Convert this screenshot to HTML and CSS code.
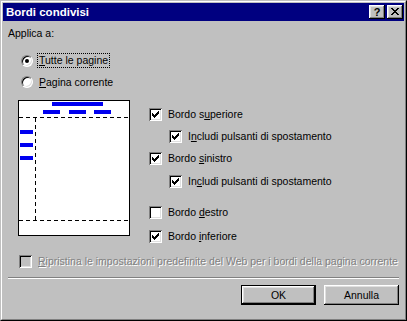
FILE: index.html
```html
<!DOCTYPE html>
<html lang="it">
<head>
    <meta charset="UTF-8">
    <meta name="viewport" content="width=device-width, initial-scale=1.0">
    <title>Bordi condivisi</title>
    <link rel="stylesheet" href="styles.css">
</head>
<body>
    <div class="window">
        <div class="frame">
            <div class="titlebar">
                <span class="title">Bordi condivisi</span>
                <div class="title-buttons">
                    <span class="tbtn help">?</span>
                    <span class="tbtn">
                        <svg width="8" height="7" viewBox="0 0 8 7" shape-rendering="crispEdges"><path d="M0 0h2v1h-2zM6 0h2v1h-2zM1 1h2v1h-2zM5 1h2v1h-2zM2 2h4v1h-4zM3 3h2v1h-2zM2 4h4v1h-4zM1 5h2v1h-2zM5 5h2v1h-2zM0 6h2v1h-2zM6 6h2v1h-2z" fill="#000"/></svg>
                    </span>
                </div>
            </div>

            <div class="content">
                <div class="columns">
                    <div class="left">
                        <div class="label">Applica a:</div>
                        <div class="radio-row first">
                            <span class="radio checked"></span>
                            <span class="focus"><u>T</u>utte le pagine</span>
                        </div>
                        <div class="radio-row">
                            <span class="radio"></span>
                            <span class="radio-text"><u>P</u>agina corrente</span>
                        </div>
                        <div class="preview">
                            <svg width="110" height="134" viewBox="0 0 110 134" shape-rendering="crispEdges">
                                <rect x="33" y="1" width="51" height="4" fill="#0000f0"/>
                                <rect x="24" y="9" width="17" height="4" fill="#0000f0"/>
                                <rect x="50" y="9" width="17" height="4" fill="#0000f0"/>
                                <rect x="75" y="9" width="17" height="4" fill="#0000f0"/>
                                <rect x="1" y="29" width="13" height="4" fill="#0000f0"/>
                                <rect x="1" y="42" width="13" height="4" fill="#0000f0"/>
                                <rect x="1" y="55" width="13" height="4" fill="#0000f0"/>
                                <line x1="0" y1="16.5" x2="110" y2="16.5" stroke="#000" stroke-dasharray="4 3"/>
                                <line x1="16.5" y1="17" x2="16.5" y2="119" stroke="#000" stroke-dasharray="4 3"/>
                                <line x1="0" y1="119.5" x2="110" y2="119.5" stroke="#000" stroke-dasharray="4 3"/>
                            </svg>
                        </div>
                    </div>

                    <div class="right">
                        <div class="check-row r1">
                            <span class="check checked"><svg width="9" height="9" viewBox="0 0 9 9" shape-rendering="crispEdges"><path d="M7 1h1v1h-1zM6 2h2v1h-2zM1 3h1v1h-1zM5 3h3v1h-3zM1 4h2v1h-2zM4 4h3v1h-3zM1 5h5v1h-5zM2 6h3v1h-3zM3 7h1v1h-1z" fill="#000"/></svg></span>
                            <span>Bordo s<u>u</u>periore</span>
                        </div>
                        <div class="check-row sub r2">
                            <span class="check checked"><svg width="9" height="9" viewBox="0 0 9 9" shape-rendering="crispEdges"><path d="M7 1h1v1h-1zM6 2h2v1h-2zM1 3h1v1h-1zM5 3h3v1h-3zM1 4h2v1h-2zM4 4h3v1h-3zM1 5h5v1h-5zM2 6h3v1h-3zM3 7h1v1h-1z" fill="#000"/></svg></span>
                            <span>I<u>n</u>cludi pulsanti di spostamento</span>
                        </div>
                        <div class="check-row r3">
                            <span class="check checked"><svg width="9" height="9" viewBox="0 0 9 9" shape-rendering="crispEdges"><path d="M7 1h1v1h-1zM6 2h2v1h-2zM1 3h1v1h-1zM5 3h3v1h-3zM1 4h2v1h-2zM4 4h3v1h-3zM1 5h5v1h-5zM2 6h3v1h-3zM3 7h1v1h-1z" fill="#000"/></svg></span>
                            <span>Bordo <u>s</u>inistro</span>
                        </div>
                        <div class="check-row sub r4">
                            <span class="check checked"><svg width="9" height="9" viewBox="0 0 9 9" shape-rendering="crispEdges"><path d="M7 1h1v1h-1zM6 2h2v1h-2zM1 3h1v1h-1zM5 3h3v1h-3zM1 4h2v1h-2zM4 4h3v1h-3zM1 5h5v1h-5zM2 6h3v1h-3zM3 7h1v1h-1z" fill="#000"/></svg></span>
                            <span>In<u>c</u>ludi pulsanti di spostamento</span>
                        </div>
                        <div class="check-row r5">
                            <span class="check"></span>
                            <span>Bordo <u>d</u>estro</span>
                        </div>
                        <div class="check-row r6">
                            <span class="check checked"><svg width="9" height="9" viewBox="0 0 9 9" shape-rendering="crispEdges"><path d="M7 1h1v1h-1zM6 2h2v1h-2zM1 3h1v1h-1zM5 3h3v1h-3zM1 4h2v1h-2zM4 4h3v1h-3zM1 5h5v1h-5zM2 6h3v1h-3zM3 7h1v1h-1z" fill="#000"/></svg></span>
                            <span>Bordo <u>i</u>nferiore</span>
                        </div>
                    </div>
                </div>

                <div class="check-row restore disabled">
                    <span class="check"></span>
                    <span><u>R</u>ipristina le impostazioni predefinite del Web per i bordi della pagina corrente</span>
                </div>

                <div class="separator"></div>

                <div class="buttons">
                    <button class="btn default">OK</button>
                    <button class="btn">Annulla</button>
                </div>
            </div>
        </div>
    </div>
</body>
</html>
```

FILE: styles.css
```css
body {
    margin: 0;
    font-family: "Liberation Sans", Arial, sans-serif;
    font-size: 10.5px;
    color: #000;
}
.window {
    width: 407px;
    height: 321px;
    box-sizing: border-box;
    background-color: #c0c0c0;
    border: 1px solid;
    border-color: #c0c0c0 #000 #000 #c0c0c0;
}
.frame {
    height: 100%;
    box-sizing: border-box;
    border: 1px solid;
    border-color: #fff #808080 #808080 #fff;
    padding: 1px;
}
.titlebar {
    height: 18px;
    background-color: #000080;
    display: flex;
    align-items: center;
    justify-content: space-between;
    padding-left: 3px;
}
.title {
    color: #fff;
    font-weight: bold;
    font-size: 11.5px;
}
.title-buttons {
    display: flex;
    gap: 2px;
    margin-right: 1px;
}
.tbtn {
    width: 16px;
    height: 14px;
    box-sizing: border-box;
    background-color: #c0c0c0;
    box-shadow: inset -1px -1px #000, inset 1px 1px #fff, inset -2px -2px #808080, inset 2px 2px #dfdfdf;
    display: flex;
    align-items: center;
    justify-content: center;
    font-weight: bold;
    font-size: 11px;
    line-height: 14px;
}
.tbtn svg {
    display: block;
    margin-top: -1px;
}
.content {
    padding: 6px 5px 0 5px;
}
.columns {
    display: flex;
}
.left {
    width: 141px;
    flex-shrink: 0;
}
.label {
    line-height: 13px;
}
.radio-row {
    display: flex;
    align-items: center;
    gap: 4px;
    height: 13px;
    margin-top: 8px;
    margin-left: 13px;
}
.radio-row.first {
    margin-top: 14px;
}
.radio {
    width: 12px;
    height: 12px;
    box-sizing: border-box;
    border-radius: 50%;
    border: 1px solid;
    border-color: #808080 #fff #fff #808080;
    box-shadow: inset 1px 1px #000, inset -1px -1px #dfdfdf;
    background-color: #fff;
    display: flex;
    align-items: center;
    justify-content: center;
}
.radio.checked::after {
    content: "";
    width: 4px;
    height: 4px;
    border-radius: 50%;
    background-color: #000;
}
.focus {
    border: 1px dotted #000;
    padding: 0 1px;
    line-height: 13px;
}
.radio-text {
    padding-left: 2px;
}
.preview {
    margin-top: 12px;
    margin-left: 10px;
    width: 110px;
    height: 134px;
    border: 1px solid #000;
    background-color: #fff;
}
.preview svg {
    display: block;
}
.right {
    display: flex;
    flex-direction: column;
}
.check-row {
    display: flex;
    align-items: center;
    gap: 6px;
    height: 13px;
    line-height: 13px;
    white-space: nowrap;
}
.check-row.sub {
    margin-left: 20px;
}
.r1 { margin-top: 81px; }
.r2 { margin-top: 9px; }
.r3 { margin-top: 9px; }
.r4 { margin-top: 10px; }
.r5 { margin-top: 18px; }
.r6 { margin-top: 11px; }
.check {
    width: 13px;
    height: 13px;
    flex-shrink: 0;
    box-sizing: border-box;
    padding: 2px;
    background-color: #fff;
    box-shadow: inset 1px 1px #808080, inset -1px -1px #fff, inset 2px 2px #000, inset -2px -2px #dfdfdf;
}
.check svg {
    display: block;
}
.check-row.restore {
    margin-top: 12px;
    margin-left: 11px;
}
.check-row.disabled .check {
    background-color: #c0c0c0;
}
.check-row.disabled span {
    color: #808080;
    text-shadow: 1px 1px #fff;
}
.separator {
    margin-top: 9px;
    border-top: 1px solid #808080;
    border-bottom: 1px solid #fff;
    height: 0;
}
.buttons {
    display: flex;
    justify-content: flex-end;
    gap: 8px;
    margin-top: 6px;
}
.btn {
    width: 75px;
    height: 20px;
    box-sizing: border-box;
    font-family: "Liberation Sans", Arial, sans-serif;
    font-size: 10.5px;
    color: #000;
    background-color: #c0c0c0;
    border: none;
    padding: 0;
    box-shadow: inset -1px -1px #000, inset 1px 1px #fff, inset -2px -2px #808080, inset 2px 2px #dfdfdf;
}
.btn.default {
    border: 1px solid #000;
}
```
